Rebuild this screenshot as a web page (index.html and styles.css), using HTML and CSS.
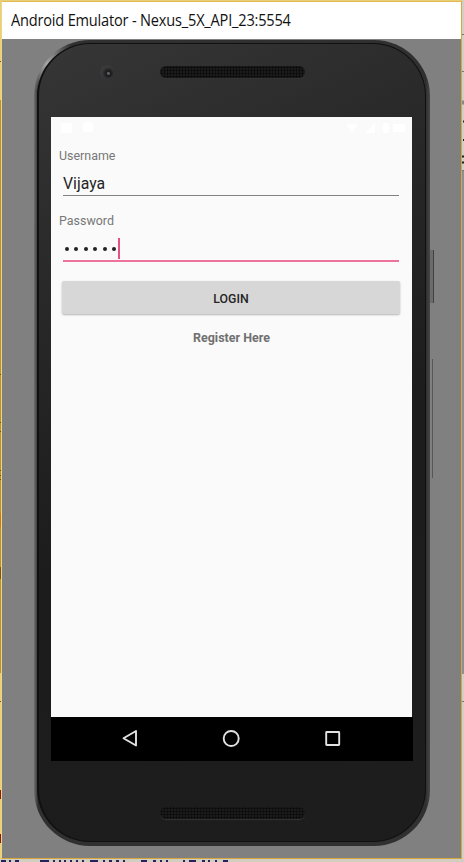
FILE: index.html
```html
<!DOCTYPE html>
<html lang="en">
<head>
<meta charset="utf-8">
<title>Android Emulator</title>
<link rel="stylesheet" href="styles.css">
</head>
<body>
<svg class="backdrop" width="464" height="862" aria-hidden="true">
  <rect x="462" width="2" height="862" fill="#d2cfc4"/>
  <path d="M462 34.5h2M462 71.5h2M462 170.5h2M462 701.5h2" stroke="#777"/>
  <path d="M462 102.5h2" stroke="#888" stroke-width="4"/>
  <rect x="462" y="171" width="2" height="503" fill="#8f8f8f"/>
  <path d="M463 121.500h1M463 140h1M462 156.500h2M462 162.500h2" stroke="#182418" stroke-width="2"/>
  <rect y="859" width="464" height="3" fill="#d2cfc0"/>
  <path d="M1 861h5M9 861h2M15 861h4M40 861h9M53 861h2M59 861h2M64 861h2M70 861h2M76 861h2M82 861h2M90 861h8M103 861h2M109 861h3M116 861h3M123 861h2M141 861h6M153 861h3M160 861h2M166 861h2M183 861h2M189 861h7M202 861h3M208 861h2M215 861h2M223 861h5" stroke="#25245a" stroke-width="2"/>
</svg>
<div class="window">
  <header class="titlebar"><span>Android Emulator - Nexus_5X_API_23:5554</span></header>
  <main class="desktop">
    <div class="power"></div>
    <div class="volume"></div>
    <div class="phone">
      <div class="face">
        <div class="top-bezel">
          <div class="camera"></div>
          <div class="speaker"></div>
        </div>
        <div class="screen">
          <div class="statusbar">
            <svg width="361" height="24" aria-hidden="true"><g fill="#fff"><rect x="10" y="6" width="11" height="10" rx="1"/><rect x="32" y="5" width="10" height="10" rx="3"/><path d="M295 7h12l-6 9zM324 5v11h-10zM332 6h6v10h-6zM342 7h12v8h-12z"/></g></svg>
          </div>
          <form class="form">
            <label class="label">Username</label>
            <div class="field name">Vijaya</div>
            <label class="label second">Password</label>
            <div class="field password"><i></i><i></i><i></i><i></i><i></i><i></i><b></b></div>
            <button class="login" type="button">LOGIN</button>
            <div class="register">Register Here</div>
          </form>
        </div>
        <nav class="navbar">
          <svg width="362" height="43" fill="none" stroke="#e2e2e2" stroke-width="1.900" stroke-linejoin="round"><path d="M85 14v14.500L72.500 21.300z"/><circle cx="180.200" cy="21.500" r="7.500"/><rect x="275.200" y="15" width="13" height="13" rx=".5"/></svg>
        </nav>
        <div class="bottom-bezel"><div class="speaker"></div></div>
      </div>
    </div>
  </main>
</div>
<svg class="edge" width="2" height="862" aria-hidden="true">
  <rect y="100" width="1" height="573" fill="#b8922e"/>
  <path d="M0 61.500h1M0 374.500h1M0 422.500h1M0 431.500h1M0 470.500h1M0 475.500h1M0 479.500h1M0 567v6M0 578.500h1M0 701.500h1" stroke="#665020"/>
  <rect y="513" width="1" height="14" fill="#c77c1c"/>
  <rect y="567" width="1" height="12" fill="#76591a"/>
  <rect y="790" width="1" height="9" fill="#8c1712"/>
  <rect y="834" width="1" height="9" fill="#8c1712"/>
</svg>
</body>
</html>
```
FILE: styles.css
```css
* { box-sizing: border-box; }
body {
  margin: 0;
  width: 464px;
  height: 862px;
  overflow: hidden;
  position: relative;
  background: #e7d07a;
  font-family: Roboto, sans-serif;
}
.backdrop { position: absolute; inset: 0; }
.edge { position: absolute; left: 0; top: 0; }
.window {
  position: relative;
  width: 461px;
  height: 858px;
  margin: 1px 0 0 1px;
  border: 1px solid #d7a63e;
  border-top-color: #e3b84c;
  border-left-color: #f0d486;
  background: #808080;
}
.titlebar {
  height: 37px;
  padding-left: 9px;
  background: #fff;
  color: #111;
  font: 16px/37px "Open Sans", sans-serif;
  white-space: nowrap;
}
.titlebar span {
  display: inline-block;
  letter-spacing: -.2px;
  transform: scaleX(.91);
  transform-origin: left;
}
.desktop { position: relative; padding: 1px 0 0 32px; }
.phone {
  position: relative;
  width: 396px;
  height: 806px;
  padding: 3px 4px 4px 3px;
  border-radius: 56px;
  background:
    radial-gradient(circle at 14px 24px, #aaa 0, transparent 30px),
    linear-gradient(90deg, #707070, #505050 2px, #303030 4px, #303030 392px, #464646);
}
.face {
  height: 799px;
  padding-left: 12px;
  border-radius: 53px;
  border: 1px solid #101010;
  border-left-width: 2px;
  background: linear-gradient(155deg, #373637 0, #29292a 25%, #1c1c1d 55%, #1d1d1e 100%);
}
.top-bezel { height: 73px; position: relative; padding: 22px 0 0 109px; }
.speaker {
  width: 145px;
  height: 12px;
  border-radius: 6px;
  background: radial-gradient(circle, #0b0b0b 40%, #1b1b1c 65%) 0 0 / 3px 3px;
  box-shadow: 0 1px 1px #353535;
}
.camera {
  position: absolute;
  left: 49px;
  top: 21px;
  width: 14px;
  height: 14px;
  border-radius: 50%;
  background: radial-gradient(circle at 60% 60%, #606060 0 1px, #1d1d1f 2px 3px, #303032 5px, #3a3a3b 7px);
}
.screen { width: 361px; height: 600px; background: #fafafa; }
.statusbar { height: 24px; }
.statusbar svg, .navbar svg { display: block; }
.form { padding: 7px 8px; }
.label { display: block; height: 16px; color: #777; font-size: 12.450px; line-height: 16px; }
.field { width: 336px; margin-left: 4px; border-bottom: 1px solid #828282; }
.name { height: 32px; color: #252525; font-size: 15.800px; line-height: 40px; }
.second { margin-top: 17px; }
.password { display: flex; align-items: center; height: 33px; padding: 8px 0 0 2px; border-bottom: 2px solid #ee739c; }
.password i { width: 4px; height: 4px; margin-right: 5.400px; border-radius: 50%; background: #222; }
.password b { width: 2px; height: 21px; margin-left: -3px; background: #e84f83; }
.login {
  display: block;
  width: 338px;
  height: 33px;
  margin: 19px 0 0 3px;
  border: 0;
  border-radius: 2px;
  background: #d7d7d7;
  box-shadow: 0 1px 2px #b4b4b4;
  color: #252525;
  font: 500 12.300px/33px Roboto, sans-serif;
  padding: 2px 0 0;
}
.register { margin-top: 15px; color: #707070; font-size: 12.500px; font-weight: 700; line-height: 18px; text-align: center; }
.navbar { width: 362px; height: 44px; background: #000; }
.bottom-bezel { padding: 46px 0 0 109px; }
.power, .volume { position: absolute; z-index: 1; }
.power { left: 428px; top: 211px; width: 4px; height: 53px; background: #6b6b6b; border-right: 1px solid #414141; }
.volume { left: 430px; top: 320px; width: 1px; height: 119px; background: #565656; }
```
